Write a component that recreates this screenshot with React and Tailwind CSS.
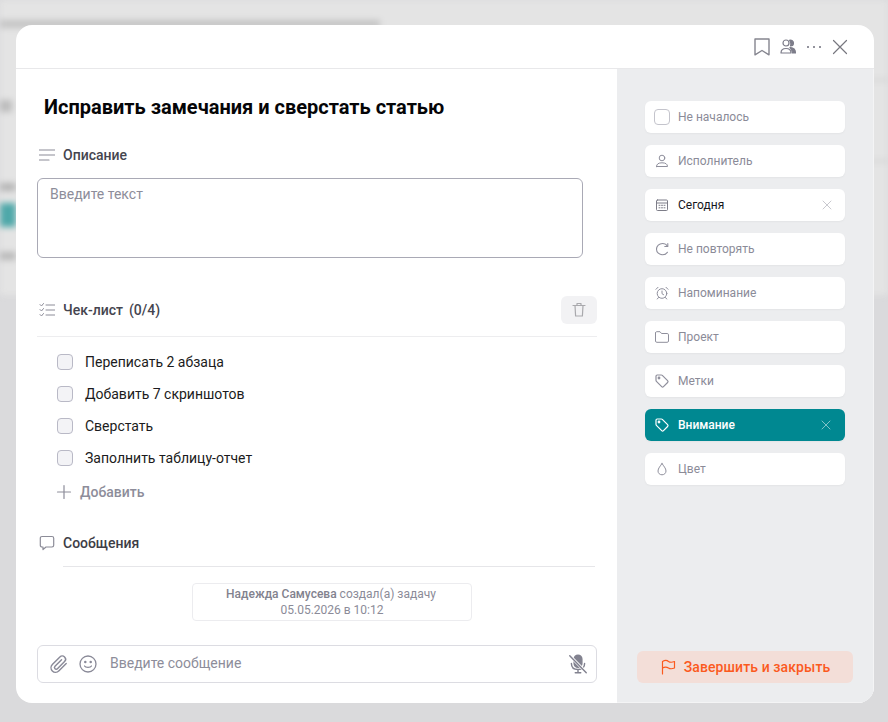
import React from "react";

const font = { fontFamily: "Roboto, sans-serif" };

function Icon({ children, size = 16, className = "text-[#8f8f9c]", sw = 1.2, vb = 16 }) {
  return (
    <svg width={size} height={size} viewBox={`0 0 ${vb} ${vb}`} fill="none" stroke="currentColor" strokeWidth={sw} strokeLinecap="round" strokeLinejoin="round" className={`shrink-0 ${className}`}>
      {children}
    </svg>
  );
}

const TagIcon = ({ className }) => (
  <Icon className={className}>
    <path d="M2 3.2C2 2.5 2.5 2 3.2 2H7.3C7.7 2 8 2.1 8.3 2.4L13.6 7.7C14.1 8.2 14.1 9 13.6 9.5L9.5 13.6C9 14.1 8.2 14.1 7.7 13.6L2.4 8.3C2.1 8 2 7.7 2 7.3V3.2Z" />
    <circle cx="5" cy="5" r="0.8" />
  </Icon>
);

const CloseIcon = ({ className, size = 10 }) => (
  <Icon size={size} vb={10} sw={1} className={className}>
    <path d="M1 1L9 9M9 1L1 9" />
  </Icon>
);

function SideItem({ icon, label, dark, active, onClear }) {
  return (
    <div className={`h-8 rounded-md flex items-center pl-[9px] gap-2 text-xs shadow-[0_1px_2px_rgba(0,0,0,0.04)] ${active ? "bg-[#008891] text-white font-medium pr-[14px]" : "bg-white pr-[13px]"} ${dark ? "text-[#16161c]" : ""} ${!active && !dark ? "text-[#8b8b98]" : ""}`}>
      <span className="w-4 h-4 flex items-center justify-center shrink-0">{icon}</span>
      <span className="flex-1">{label}</span>
      {onClear && <CloseIcon className={active ? "text-[#7fc3c8]" : "text-[#c9c9cf]"} />}
    </div>
  );
}

function CheckRow({ text }) {
  return (
    <div className="h-8 flex items-center gap-[12px]">
      <span className="w-4 h-4 rounded-[4px] border border-[#b9b9c6] bg-[#f3f3f6]" />
      <span className="text-sm text-[#1b1b20]">{text}</span>
    </div>
  );
}

export default function App() {
  return (
    <div style={font} className="relative w-[888px] h-[722px] overflow-hidden bg-[#dadadc]">
      {/* размытая страница за модалкой */}
      <div className="absolute inset-x-0 top-0 h-[295px] bg-[#e4e4e4] blur-[3px]">
        <div className="h-[20px]" />
        <div className="h-[8px] w-[380px] bg-[#c4c4c4]" />
        <div className="h-[4px] mt-[50px] ml-auto w-[20px] bg-[#d8d8d8]" />
        <div className="h-[12px] mt-[18px] w-[12px] bg-[#bcbcbc]" />
        <div className="h-[4px] mt-[47px] ml-auto w-[20px] bg-[#d8d8d8]" />
        <div className="h-[8px] mt-[20px] w-[16px] bg-[#b4b4b4]" />
        <div className="h-[24px] mt-[12px] w-[16px] bg-[#4ea8a9]" />
        <div className="h-[8px] mt-[25px] w-[16px] bg-[#b8b8b8]" />
      </div>

      <div className="absolute left-4 top-[25px] w-[858px] h-[678px] rounded-2xl overflow-hidden bg-white flex flex-col">
        <div className="h-[44px] shrink-0 border-b border-[#e8e8ea] flex items-center justify-end pr-[26px] gap-[8px]">
          <Icon size={20} vb={20} sw={1.4} className="text-[#85858f]">
            <path d="M4 2H18V17.8L11 13.5L4 17.8V2Z" />
          </Icon>
          <Icon size={18} vb={18} className="text-[#7d7d8a]">
            <circle cx="7" cy="5" r="3" />
            <path d="M2 15C2 12 4 10.5 7 10.5C10 10.5 12 12 12 15H2Z" />
            <path d="M10.5 2.2C12.5 1.6 14.5 3 14.5 5C14.5 6.6 13.2 8 11.5 8C12 7 12.2 4 10.5 2.2Z" fill="currentColor" />
            <path d="M11 9.5C14 9.5 16.5 11 16.5 15H13.5C13.5 13 12.5 11 11 9.5Z" fill="currentColor" />
          </Icon>
          <span className="w-[14px] flex justify-between ml-[2px] mr-[2px]">
            <span className="w-[2px] h-[2px] rounded-full bg-[#6f6f7c]" />
            <span className="w-[2px] h-[2px] rounded-full bg-[#6f6f7c]" />
            <span className="w-[2px] h-[2px] rounded-full bg-[#6f6f7c]" />
          </span>
          <Icon size={16} className="text-[#77777f] ml-[1px]">
            <path d="M1.5 1.5L14.5 14.5M14.5 1.5L1.5 14.5" />
          </Icon>
        </div>

        <div className="flex-1 flex min-h-0">
          <div className="w-[601px] shrink-0 pl-[21px] pr-[20px] flex flex-col">
            <h1 className="mt-[25px] ml-[7px] text-[20px] leading-[26px] font-bold text-[#050507]">Исправить замечания и сверстать статью</h1>

            <div className="mt-[25px] h-[20px] pl-[2px] flex items-center gap-[8px] text-[14px] font-medium text-[#45454f]">
              <Icon size={16} className="text-[#8c8c98]">
                <path d="M0.5 3H16M0.5 8H16M0.5 13H10" />
              </Icon>
              Описание
            </div>
            <div className="mt-[13px] w-[546px] h-[80px] rounded-[6px] border border-[#a9a9b5] px-[12px] py-[5px] text-sm text-[#8d8d9a]">Введите текст</div>

            <div className="mt-[38px] h-[41px] border-b border-[#ededef] flex items-start justify-between">
              <div className="h-[28px] pl-[2px] flex items-center gap-[8px] text-[14px] font-medium text-[#45454f]">
                <Icon size={16} className="text-[#8c8c98]" sw={1}>
                  <path d="M1 2.5L2.5 4L4.5 1.5M1 7.5L2.5 9L4.5 6.5M1 12.5L2.5 14L4.5 11.5M7 3H16M7 8H16M7 13H16" />
                </Icon>
                <span>Чек-лист</span>
                <span className="-ml-[2px]">(0/4)</span>
              </div>
              <div className="w-9 h-7 rounded-md bg-[#f2f2f4] flex items-center justify-center">
                <Icon size={16} className="text-[#a9a9ad]">
                  <path d="M2 3.5H14M4 3.5L4.6 14H11.4L12 3.5M6 3.5V1.5H10V3.5" />
                </Icon>
              </div>
            </div>

            <div className="mt-[9px] pl-[20px]">
              <CheckRow text="Переписать 2 абзаца" />
              <CheckRow text="Добавить 7 скриншотов" />
              <CheckRow text="Сверстать" />
              <CheckRow text="Заполнить таблицу-отчет" />
            </div>
            <div className="mt-[4px] ml-[19px] h-[28px] flex items-center gap-[8px] text-sm font-medium text-[#8d8d9a]">
              <Icon size={16} className="text-[#8d8d9a]"><path d="M8 1.5V14.5M1.5 8H14.5" /></Icon>
              Добавить
            </div>

            <div className="mt-[25px] h-[24px] pl-[2px] flex items-center gap-[8px] text-[14px] font-medium text-[#3d3d46]">
              <Icon size={16} className="text-[#8c8c98]">
                <path d="M3 1.5H13C14 1.5 14.7 2.2 14.7 3.2V10.3C14.7 11.3 14 12 13 12H7L4 14.5V12H3C2 12 1.3 11.3 1.3 10.3V3.2C1.3 2.2 2 1.5 3 1.5Z" />
              </Icon>
              Сообщения
            </div>
            <div className="mt-[11px] ml-[26px] mr-[2px] border-b border-[#e6e6e9]" />

            <div className="mt-4 ml-[155px] w-[280px] h-[38px] rounded-[4px] border border-[#ececef] text-center text-xs leading-[16px] pt-[2px] text-[#8b8b98]">
              <div className="pr-[2px]"><span className="font-medium text-[#82828e]">Надежда Самусева</span> создал(а) задачу</div>
              <div>05.05.2026 в 10:12</div>
            </div>

            <div className="mt-6 h-[38px] rounded-md border border-[#dcdce2] flex items-center pl-[11px] pr-[7px]">
              <Icon size={20} vb={18} className="text-[#8a8a98]" sw={1.3}>
                <path d="M15.5 8.5L9 15C7.2 16.8 4.6 16.8 3 15.2C1.4 13.6 1.4 11 3.2 9.2L9.8 2.6C11 1.4 12.8 1.4 14 2.6C15.2 3.8 15.2 5.6 14 6.8L7.6 13.2C7 13.8 6 13.8 5.4 13.2C4.8 12.6 4.8 11.6 5.4 11L11.3 5.1" />
              </Icon>
              <Icon size={18} vb={18} className="text-[#8a8a98] ml-[10px]" sw={1.3}>
                <circle cx="9" cy="9" r="8" />
                <circle cx="6.3" cy="7" r="0.6" fill="currentColor" />
                <circle cx="11.7" cy="7" r="0.6" fill="currentColor" />
                <path d="M5.5 11C6.5 12.7 11.5 12.7 12.5 11" />
              </Icon>
              <span className="ml-[13px] flex-1 pb-[2px] text-sm text-[#8d8d9a]">Введите сообщение</span>
              <Icon size={22} vb={20} className="text-[#82828f]" sw={1.3}>
                <rect x="6.5" y="2" width="7" height="11" rx="3.5" fill="currentColor" />
                <path d="M4 9.5C4 13 6.5 15 10 15C13.5 15 16 13 16 9.5M10 15V18M7.5 18H12.5" />
                <path d="M3 3L17 17" stroke="#fff" strokeWidth="2.6" />
                <path d="M2.5 2.5L17.5 18" />
              </Icon>
            </div>
          </div>

          <div className="flex-1 bg-[#ecedef] border-r border-b border-[#f4f4f5] pl-5 pr-5 flex flex-col">
            <div className="mt-[32px] px-2 flex flex-col gap-3">
              <SideItem label="Не началось" icon={<span className="w-4 h-4 rounded-[4px] border border-[#c4c4cc]" />} />
              <SideItem label="Исполнитель" icon={
                <Icon size={14} vb={14} sw={1}><circle cx="7" cy="4" r="2.8" /><path d="M1.5 12.5C1.5 10 3.5 8.8 7 8.8C10.5 8.8 12.5 10 12.5 12.5H1.5Z" /></Icon>
              } />
              <SideItem dark label="Сегодня" onClear icon={
                <Icon size={14} vb={14} sw={1} className="text-[#7d7d88]"><rect x="1.5" y="2" width="11" height="10.5" rx="1" /><path d="M1.5 5H12.5M4 7.3H5M6.5 7.3H7.5M9 7.3H10M4 9.8H5M6.5 9.8H7.5M9 9.8H10" /></Icon>
              } />
              <SideItem label="Не повторять" icon={
                <Icon size={14} vb={14} sw={1.1}><path d="M12.5 4.2C11.4 2.4 9.4 1.5 7.5 1.5C4.2 1.5 1.5 4 1.5 7.2C1.5 10.4 4.2 12.8 7.5 12.8C9.6 12.8 11.3 11.8 12.4 10.3" /><path d="M12.8 1.5V4.5H9.8" /></Icon>
              } />
              <SideItem label="Напоминание" icon={
                <Icon size={14} vb={14} sw={1}><circle cx="7" cy="7.5" r="4.8" /><path d="M7 5V7.7L8.6 8.7M1 3.3L3 1.3M13 3.3L11 1.3M3.5 11.5L2.3 13M10.5 11.5L11.7 13" /></Icon>
              } />
              <SideItem label="Проект" icon={
                <Icon size={16} sw={1}><path d="M1.5 4C1.5 3.2 2 2.7 2.8 2.7H6L7.5 4.5H13.2C14 4.5 14.5 5 14.5 5.8V12C14.5 12.8 14 13.3 13.2 13.3H2.8C2 13.3 1.5 12.8 1.5 12V4Z" /></Icon>
              } />
              <SideItem label="Метки" icon={<TagIcon />} />
              <SideItem active label="Внимание" onClear icon={<TagIcon className="text-white" />} />
              <SideItem label="Цвет" icon={
                <Icon size={14} vb={14} sw={1}><path d="M7 1.5C5.5 4 3 6.3 3 9C3 11.2 4.8 12.8 7 12.8C9.2 12.8 11 11.2 11 9C11 6.3 8.5 4 7 1.5Z" /></Icon>
              } />
            </div>

            <div className="mt-auto mb-[19px] h-8 rounded-md bg-[#f3ded8] flex items-center justify-center gap-2 text-sm font-medium tracking-[0.1px] text-[#fb5a1e]">
              <Icon size={16} className="text-[#fb5a1e]">
                <path d="M2.5 15V2.5C5 0.8 7.5 1.5 8.5 2.5C10 3.5 12 3.5 14.5 2.5V9C12 10 10 10 8.5 9C7 8 5 7.5 2.5 9" />
              </Icon>
              Завершить и закрыть
            </div>
          </div>
        </div>
      </div>
    </div>
  );
}
